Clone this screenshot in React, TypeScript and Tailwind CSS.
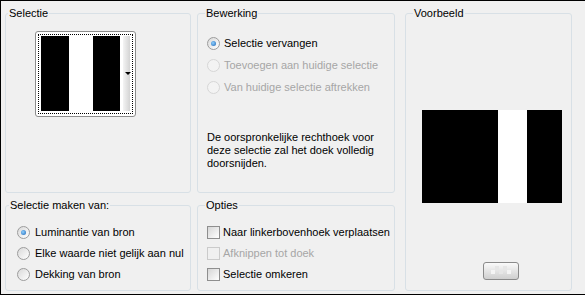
import React from "react";

const font = { fontFamily: '"Liberation Sans", Arial, sans-serif' };

function Radio({ checked, disabled }: { checked?: boolean; disabled?: boolean }) {
  return (
    <span
      className={`flex h-[13px] w-[13px] shrink-0 items-center justify-center rounded-full border ${
        disabled
          ? "border-[#d6d6d6] bg-[#f3f3f3]"
          : "border-[#9c9c9c] bg-gradient-to-br from-[#d9d9d9] to-white"
      }`}
    >
      {checked && (
        <span className="h-[5px] w-[5px] rounded-full bg-[radial-gradient(circle_at_40%_40%,#8fd0ff,#1b64b4)]" />
      )}
    </span>
  );
}

function Check({ disabled }: { disabled?: boolean }) {
  return (
    <span
      className={`h-[13px] w-[13px] shrink-0 border ${
        disabled
          ? "border-[#cbcbcb] bg-[#f0f0f0]"
          : "border-[#8e8e8e] bg-gradient-to-br from-[#d6d6d6] to-white"
      }`}
    />
  );
}

function Row({ children, disabled }: { children: React.ReactNode; disabled?: boolean }) {
  return (
    <div className={`flex h-[13px] items-center gap-[3px] ${disabled ? "text-[#a6a6a6]" : "text-black"}`}>
      {children}
    </div>
  );
}

function Group({
  title,
  className,
  legendClass,
  children,
}: {
  title: string;
  className: string;
  legendClass: string;
  children?: React.ReactNode;
}) {
  return (
    <fieldset className={`rounded-[3px] border border-[#d8e0e6] ${className}`}>
      <legend className={`h-[13px] px-[1px] leading-[13px] ${legendClass}`}>{title}</legend>
      {children}
    </fieldset>
  );
}

export default function App() {
  return (
    <div
      className="flex h-[295px] w-[585px] border-y border-l border-black bg-[#f0f0f0] pl-[4px] pt-[6px] text-[11px] text-black"
      style={font}
    >
      {/* left column */}
      <div className="flex w-[186px] flex-col gap-[6px]">
        <Group title="Selectie" className="h-[186px]" legendClass="ml-[2px]">
          <div className="ml-[29px] mt-[11px] h-[86px] w-[101px] rounded-[3px] border border-[#8c8c8c] bg-white px-[2px] py-[2px]">
            <div className="flex h-full border border-dotted border-black px-[2px] pb-[2px] pt-[1px]">
              <div className="w-[28px] bg-black" />
              <div className="w-[24px] bg-white" />
              <div className="w-[27px] bg-black" />
              <div className="flex flex-1 justify-end bg-white">
                <div className="relative w-[7px] bg-gradient-to-r from-[#f4f4f4] to-[#d4d4d4]">
                  <span className="absolute left-[2px] top-[36px] h-0 w-0 border-x-[3px] border-t-[3px] border-x-transparent border-t-black" />
                </div>
              </div>
            </div>
          </div>
        </Group>
        <Group title="Selectie maken van:" className="h-[92px]" legendClass="ml-[3px]">
          <div className="mt-[14px] flex flex-col gap-[8px] pl-[11px]">
            <Row>
              <Radio checked />
              <span className="ml-[2px]">Luminantie van bron</span>
            </Row>
            <Row>
              <Radio />
              <span className="ml-[2px]">Elke waarde niet gelijk aan nul</span>
            </Row>
            <Row>
              <Radio />
              <span className="ml-[2px]">Dekking van bron</span>
            </Row>
          </div>
        </Group>
      </div>

      {/* middle column */}
      <div className="ml-[6px] flex w-[198px] flex-col gap-[6px]">
        <Group title="Bewerking" className="h-[186px]" legendClass="ml-[7px]">
          <div className="mt-[17px] flex flex-col gap-[9px] pl-[9px]">
            <Row>
              <Radio checked />
              <span className="ml-[1px]">Selectie vervangen</span>
            </Row>
            <Row disabled>
              <Radio disabled />
              <span className="ml-[1px]">Toevoegen aan huidige selectie</span>
            </Row>
            <Row disabled>
              <Radio disabled />
              <span className="ml-[1px]">Van huidige selectie aftrekken</span>
            </Row>
          </div>
          <p className="mt-[37px] pl-[9px] pr-[14px] leading-[13px]">
            De oorspronkelijke rechthoek voor deze selectie zal het doek volledig doorsnijden.
          </p>
        </Group>
        <Group title="Opties" className="h-[92px]" legendClass="ml-[7px]">
          <div className="mt-[14px] flex flex-col gap-[8px] pl-[9px]">
            <Row>
              <Check />
              <span>Naar linkerbovenhoek verplaatsen</span>
            </Row>
            <Row disabled>
              <Check disabled />
              <span>Afknippen tot doek</span>
            </Row>
            <Row>
              <Check />
              <span>Selectie omkeren</span>
            </Row>
          </div>
        </Group>
      </div>

      {/* right column */}
      <div className="ml-[10px] w-[167px]">
        <Group title="Voorbeeld" className="h-[284px]" legendClass="ml-[7px]">
          <div className="ml-[16px] mt-[90px] flex h-[93px] w-[140px]">
            <div className="w-[76px] bg-black" />
            <div className="w-[29px] bg-white" />
            <div className="flex-1 bg-black" />
          </div>
          <div className="ml-[77px] mt-[59px] flex h-[18px] w-[36px] items-center justify-center rounded-[3px] border border-[#8a8a8a] bg-gradient-to-b from-[#fafafa] to-[#cfcfcf]">
            <svg width="20" height="10" viewBox="0 0 20 10">
              <rect x="4" y="0" width="4" height="4" fill="#e6e6e6" />
              <rect x="12" y="0" width="4" height="4" fill="#e6e6e6" />
              <rect x="8" y="4" width="4" height="4" fill="#e6e6e6" />
              <rect x="0" y="4" width="4" height="4" fill="#f4f4f4" />
              <rect x="16" y="4" width="4" height="4" fill="#f4f4f4" />
            </svg>
          </div>
        </Group>
      </div>
    </div>
  );
}
